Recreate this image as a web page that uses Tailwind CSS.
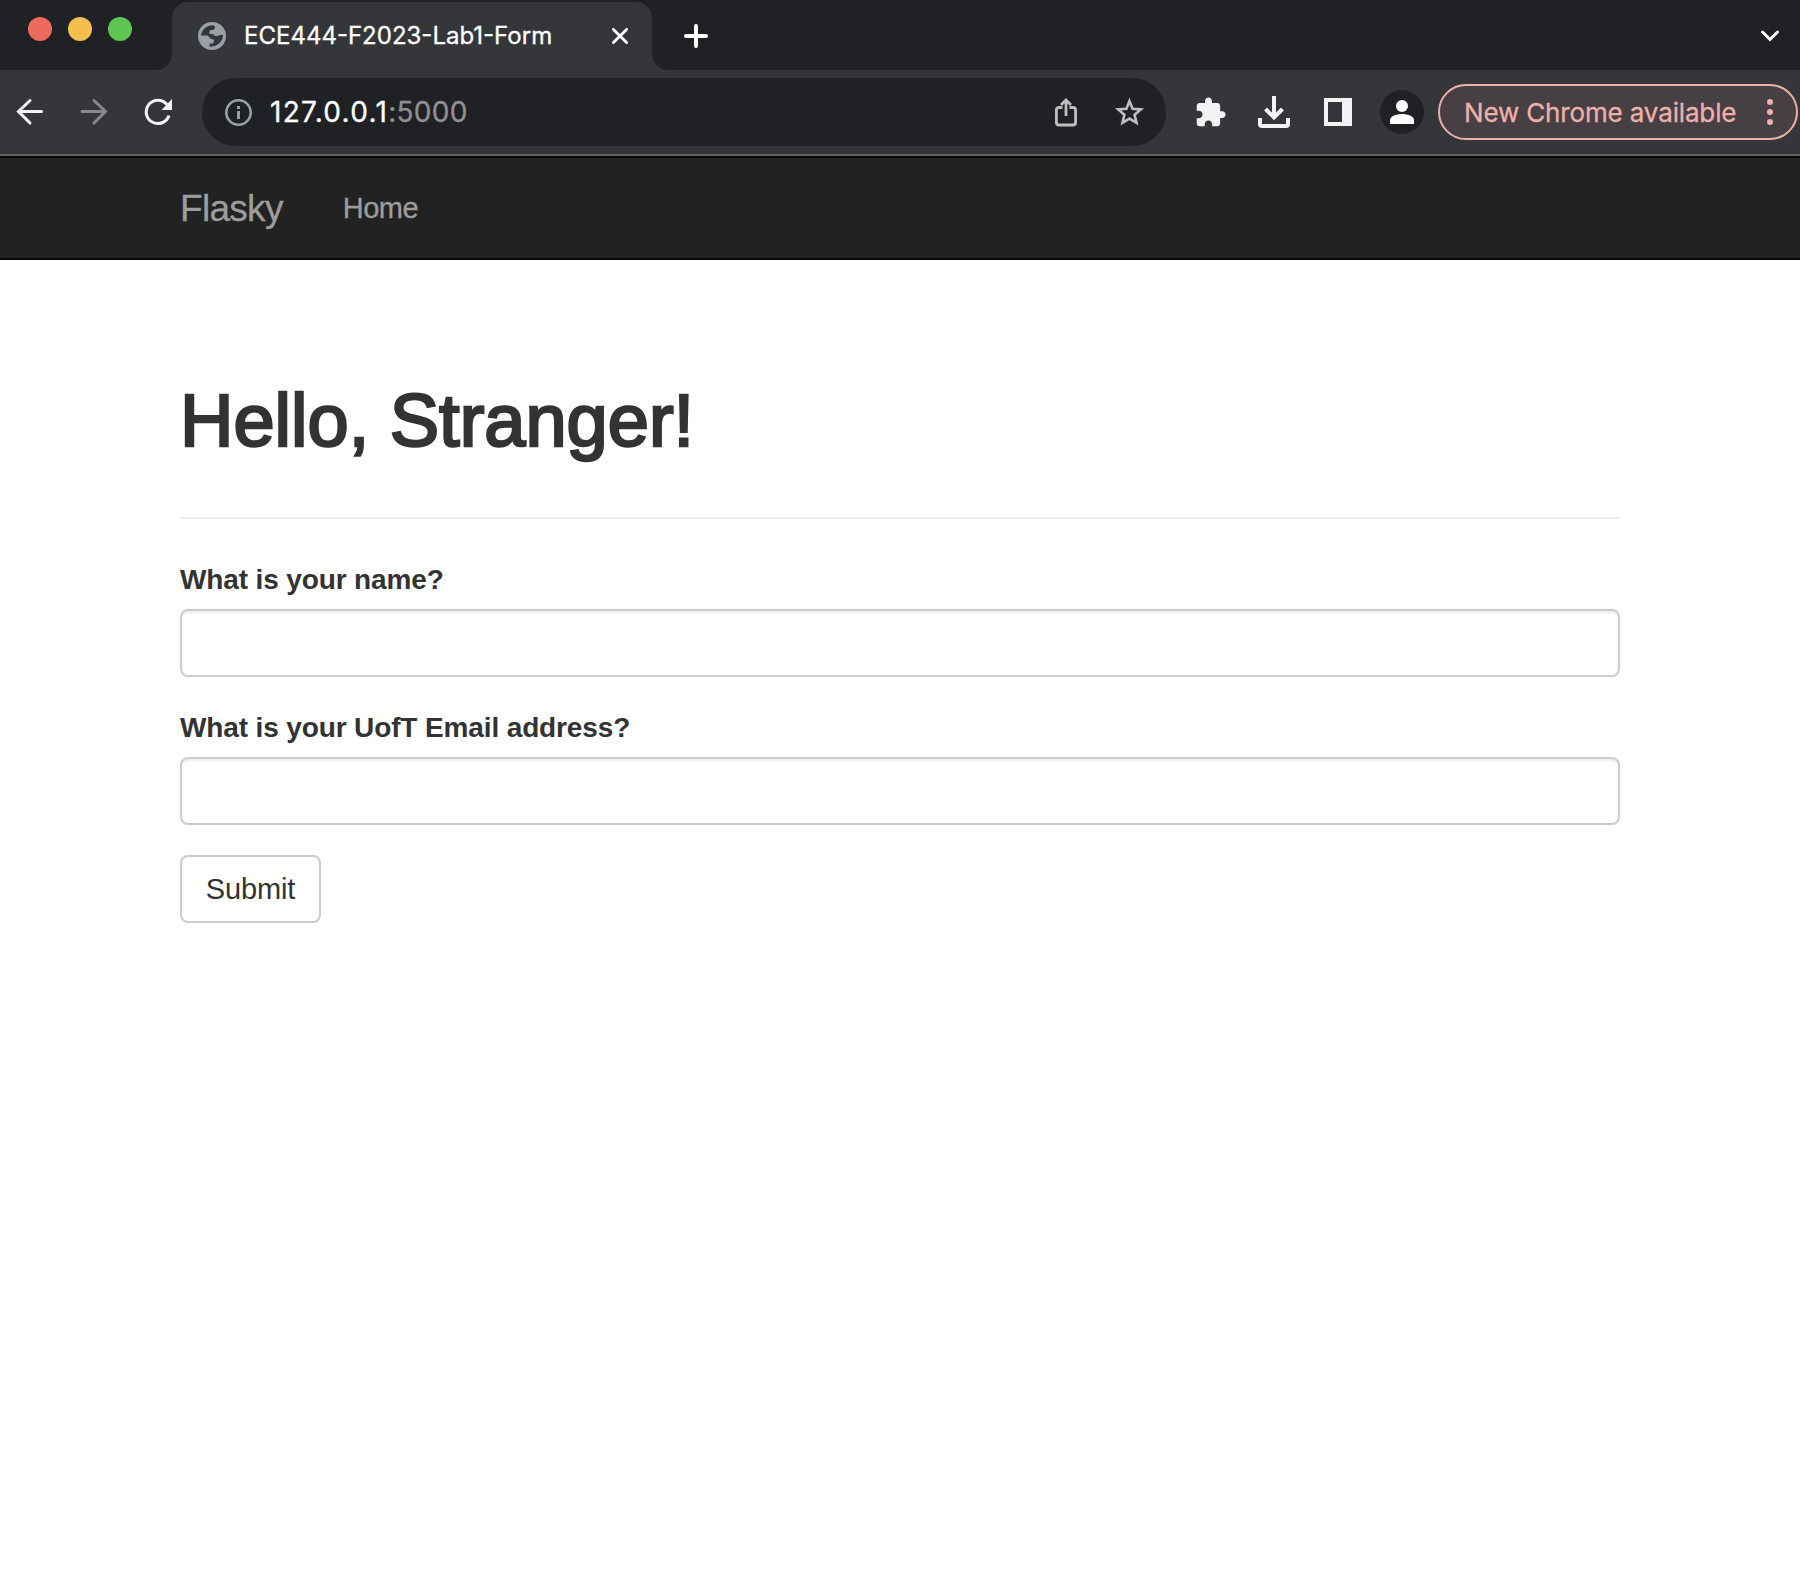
<!DOCTYPE html>
<html lang="en">
<head>
<meta charset="utf-8">
<title>ECE444-F2023-Lab1-Form</title>
<script src="https://cdn.jsdelivr.net/npm/@tailwindcss/browser@4"></script>
</head>
<body class="bg-white w-[1800px] h-[1584px] overflow-hidden font-['Liberation_Sans',sans-serif] text-[#333]">
<header class="font-[Inter,sans-serif]">
  <!-- Tab strip -->
  <div class="h-[70px] bg-[#202124] flex">
    <div class="w-[156px] pl-7 pt-[17px] flex gap-4">
      <span class="size-6 rounded-full bg-[#ed6a5e]"></span>
      <span class="size-6 rounded-full bg-[#f5bf4f]"></span>
      <span class="size-6 rounded-full bg-[#61c554]"></span>
    </div>
    <svg class="self-end size-4" viewBox="0 0 16 16"><path fill="#35363a" d="M0 16A16 16 0 0 0 16 0V16Z"/></svg>
    <div class="mt-0.5 w-[480px] bg-[#35363a] rounded-t-2xl flex items-center pl-[26px] pr-6">
      <svg class="size-7" viewBox="0 0 28 28"><circle cx="14" cy="14" r="14" fill="#9aa0a6"/><path fill="#35363a" d="M3 13.500C3.500 8 8 3.500 14.500 3.200L17 4.200V6L15.500 8H12.500L11.500 9.500V12H15L17 14H19.500L22 13H25C25 19 20.500 24.500 11.500 24.800V21.500H15L16 19.500V17.500L13 17L9.500 13.500Z"/></svg>
      <span class="ml-[18px] flex-1 text-white text-2xl leading-7 whitespace-nowrap [-webkit-text-stroke:0.3px_#fff]">ECE444-F2023-Lab1-Form</span>
      <svg class="size-4" viewBox="0 0 16 16" fill="none" stroke="#fff" stroke-width="2.8" stroke-linecap="round"><path d="M1.400 1.400 14.600 14.600M14.600 1.400 1.400 14.600"/></svg>
    </div>
    <svg class="self-end size-4" viewBox="0 0 16 16"><path fill="#35363a" d="M16 16A16 16 0 0 1 0 0V16Z"/></svg>
    <div class="flex-1 flex items-center justify-between pl-4 pr-[21px] pt-0.5">
      <svg class="size-6" viewBox="0 0 24 24" stroke="#fff" stroke-width="4" stroke-linecap="round"><path d="M2 12H22M12 2V22"/></svg>
      <svg class="w-[18px] h-3" viewBox="0 0 18 12" fill="none" stroke="#fff" stroke-width="3" stroke-linecap="round"><path d="M1.500 2 9 9.500 16.500 2"/></svg>
    </div>
  </div>
  <!-- Toolbar -->
  <div class="h-[86px] bg-[#35363a] border-b-2 border-[#5f6065] flex items-center pl-4">
    <svg class="size-7" viewBox="0 0 28 28" fill="none" stroke="#f1f3f4" stroke-width="3" stroke-linecap="round"><path d="M25.500 13.500H2.500M14 2.500 2.500 13.500 14 25"/></svg>
    <svg class="size-7 ml-9" viewBox="0 0 28 28" fill="none" stroke="#87888a" stroke-width="3" stroke-linecap="round"><path d="M2 13.500H25.500M14 2.500 25.500 13.500 14 25"/></svg>
    <svg class="size-7 ml-9" viewBox="0 0 28 28"><path fill="none" stroke="#f1f3f4" stroke-width="3" d="M25 17.500A11.700 11.700 0 1 1 23 6.500"/><path fill="#f1f3f4" d="M28 1V12H17.500Z"/></svg>
    <div class="ml-[30px] w-[964px] h-[68px] rounded-full bg-[#202124] flex items-center pl-[22px]">
      <svg class="size-7" viewBox="0 0 28 28"><circle cx="14.500" cy="14.500" r="12.200" fill="none" stroke="#9aa0a6" stroke-width="2.600"/><path fill="#9aa0a6" d="M13 8H16V11H13ZM13 13H16V21H13Z"/></svg>
      <span class="ml-[18px] flex-1 text-[28px] leading-8 text-white whitespace-nowrap tracking-[1.3px] [-webkit-text-stroke:0.3px]">127.0.0.1<span class="text-[#8f9092] tracking-[0.3px]">:5000</span></span>
      <svg class="w-6 h-8" viewBox="0 0 24 32" fill="none" stroke="#bdbec0" stroke-width="2.800"><path d="M8.500 11.500H5Q2.400 11.500 2.400 14V26.500Q2.400 29 5 29H19Q21.600 29 21.600 26.500V14Q21.600 11.500 19 11.500H15.500M12 20V4.500M7 9 12 4 17 9"/></svg>
      <svg class="size-[35px] ml-[34px] mr-[19px]" viewBox="0 0 24 24" fill="none" stroke="#bdbec0" stroke-width="1.800"><path d="M12 4.200 14.100 9.400 19.800 9.850 15.500 13.600 16.800 19.100 12 16.200 7.200 19.100 8.500 13.600 4.200 9.850 9.900 9.400Z"/></svg>
    </div>
    <svg class="size-[33px] ml-7" viewBox="0 0 24 24" fill="#f1f3f4"><path d="M20.500 11H19V7c0-1.100-.9-2-2-2h-4V3.500C13 2.120 11.880 1 10.500 1S8 2.120 8 3.500V5H4c-1.100 0-1.990.9-1.990 2v3.800H3.500c1.490 0 2.700 1.210 2.700 2.700s-1.210 2.700-2.700 2.700H2V20c0 1.100.9 2 2 2h3.800v-1.500c0-1.490 1.210-2.700 2.700-2.700 1.490 0 2.700 1.210 2.700 2.700V22H17c1.100 0 2-.9 2-2v-4h1.500c1.380 0 2.500-1.120 2.500-2.500S21.880 11 20.500 11z"/></svg>
    <svg class="size-8 ml-[31px]" viewBox="0 0 32 32" fill="none" stroke="#f1f3f4" stroke-width="4"><path d="M16 0V20M7.500 13 16 21.500 24.500 13M2 22V28Q2 30 4 30H28Q30 30 30 28V22"/></svg>
    <svg class="size-7 ml-[34px]" viewBox="0 0 28 28"><path fill="#f1f3f4" fill-rule="evenodd" d="M0 0H28V28H0ZM4 4V24H18V4Z"/></svg>
    <svg class="size-11 ml-7" viewBox="0 0 44 44"><circle cx="22" cy="22" r="22" fill="#202124"/><circle cx="22" cy="16" r="6" fill="#fff"/><path fill="#fff" d="M10 34V30C10 26 17 24 22 24S34 26 34 30V34Z"/></svg>
    <div class="ml-3.5 w-[360px] h-14 rounded-full border-2 border-[#eeb0aa] bg-[#463f43] text-[#eeb0aa] flex items-center justify-between pl-6 pr-[23px]">
      <span class="text-[26px] whitespace-nowrap tracking-[-0.15px] [-webkit-text-stroke:0.3px_#eeb0aa]">New Chrome available</span>
      <svg class="w-1.5 h-[26px]" viewBox="0 0 6 26" fill="#eeb0aa"><circle cx="3" cy="3" r="3"/><circle cx="3" cy="13" r="3"/><circle cx="3" cy="23" r="3"/></svg>
    </div>
  </div>
</header>
<nav class="h-[104px] bg-[#222] border-y-2 border-[#080808] px-[180px] flex items-center text-[#9d9d9d]">
  <a class="pt-0.5 text-[37px] leading-10 tracking-[-0.7px] [-webkit-text-stroke:0.3px_#9d9d9d]">Flasky</a>
  <a class="ml-[60px] text-[29px] leading-10 tracking-[-0.5px] [-webkit-text-stroke:0.3px_#9d9d9d]">Home</a>
</nav>
<main class="px-[180px] pt-[121px]">
  <div class="border-b-2 border-[#eee] pb-[57px]">
    <h1 class="text-[74px] leading-[79px] [-webkit-text-stroke:2.5px_#333]">Hello, Stranger!</h1>
  </div>
  <form class="pt-10 text-[28px] leading-10">
    <label class="block h-10 pt-px font-bold mb-2.5 tracking-[-0.13px]">What is your name?</label>
    <input type="text" class="block w-full h-[68px] border-2 border-[#ccc] rounded-lg shadow-[inset_0_2px_2px_rgba(0,0,0,0.075)] mb-[30px]">
    <label class="block h-10 pt-px font-bold mb-2.5 tracking-[-0.13px]">What is your UofT Email address?</label>
    <input type="text" class="block w-full h-[68px] border-2 border-[#ccc] rounded-lg shadow-[inset_0_2px_2px_rgba(0,0,0,0.075)] mb-[30px]">
    <button type="button" class="block w-[141px] h-[68px] border-2 border-[#ccc] rounded-lg bg-white text-center text-[29px] pb-px tracking-[-0.1px]">Submit</button>
  </form>
</main>
</body>
</html>
